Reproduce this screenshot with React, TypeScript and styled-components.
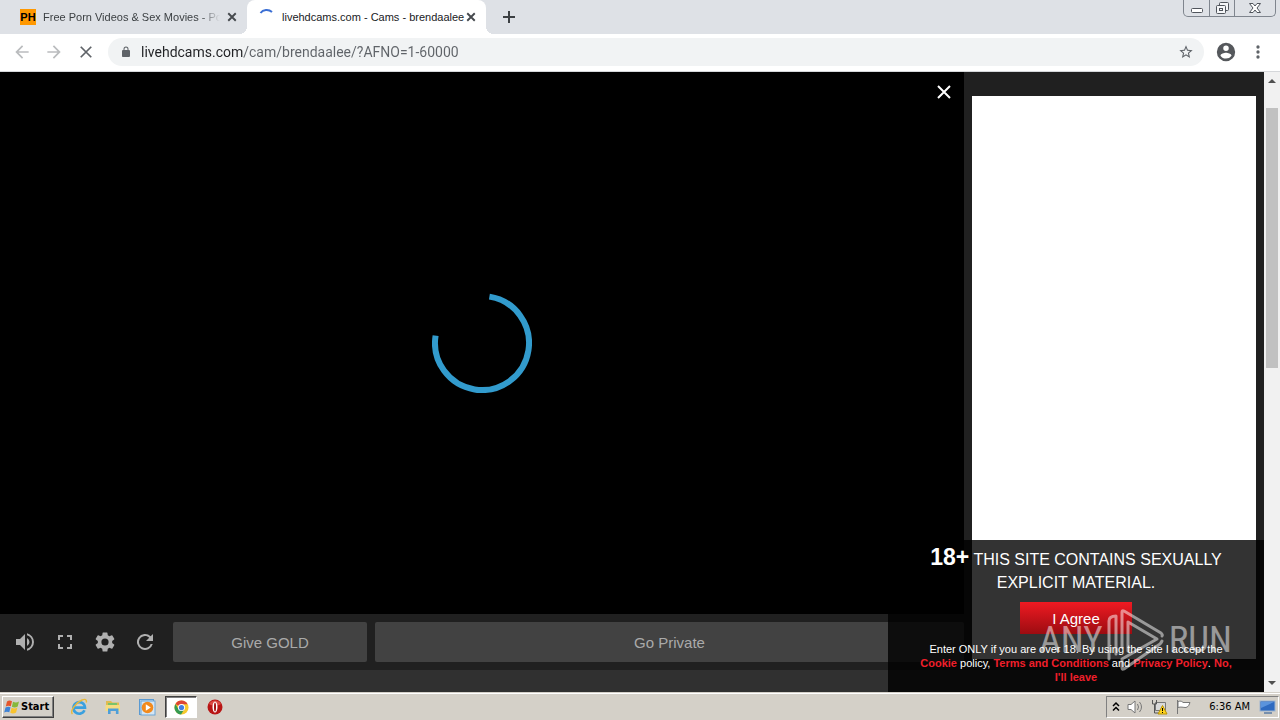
import React from "react";
import styled, { createGlobalStyle, css } from "styled-components";

const ui = `"DejaVu Sans Condensed", Roboto, "Liberation Sans", sans-serif`;
const chrome = `Roboto, "Liberation Sans", sans-serif`;
const arial = `"Liberation Sans", Arial, sans-serif`;

const GlobalStyle = createGlobalStyle`
  * { box-sizing: border-box; }
  html, body { margin: 0; background: #202020; }
  button, input { font: inherit; color: inherit; margin: 0; padding: 0; border: 0; background: none; }
  svg { display: block; flex: none; }
`;

const Screen = styled.div`
  position: relative;
  display: flex;
  flex-direction: column;
  min-height: 100vh;
  font-family: ${arial};
`;

/* Browser frame */
const TabStrip = styled.header`
  display: flex;
  height: 34px;
  background: #dee1e6;
  font-family: ${arial};
  font-size: 11px;
  color: #3c4043;
`;
const Tabs = styled.div`
  display: flex;
  padding-left: 8px;
`;
const Tab = styled.div<{ $active?: boolean }>`
  position: relative;
  display: flex;
  align-items: center;
  width: 239px;
  padding: 0 9px 0 12px;
  gap: 6px;
  border-radius: 8px 8px 0 0;
  ${(p) =>
    p.$active &&
    css`
      background: #fff;
      color: #202124;
      &::before,
      &::after {
        content: "";
        position: absolute;
        bottom: 0;
        width: 8px;
        height: 8px;
      }
      &::before {
        left: -8px;
        background: radial-gradient(circle at 0 0, transparent 8px, #fff 8px);
      }
      &::after {
        right: -8px;
        background: radial-gradient(circle at 100% 0, transparent 8px, #fff 8px);
      }
    `}
`;
const TabLabel = styled.button`
  display: flex;
  align-items: center;
  flex: 1;
  min-width: 0;
  gap: 7px;
  text-align: left;
`;
const TabTitle = styled.span<{ $fade?: boolean }>`
  flex: 1;
  white-space: nowrap;
  line-height: 16px;
  ${(p) =>
    p.$fade &&
    css`
      overflow: hidden;
      mask-image: linear-gradient(90deg, #000 calc(100% - 20px), transparent);
    `}
`;
const SiteMark = styled.span`
  width: 16px;
  height: 16px;
  background: #ff9800;
  color: #000;
  font: bold 11px/16px ${arial};
  text-align: center;
`;
const IconButton = styled.button<{ $w?: number }>`
  display: flex;
  align-items: center;
  justify-content: center;
  flex: none;
  width: ${(p) => p.$w ?? 16}px;
`;
const WindowButtons = styled.div`
  display: flex;
  height: 17px;
  margin: 0 4px 0 auto;
  border: 1px solid #7f858e;
  border-top: 0;
  border-radius: 0 0 5px 5px;
`;
const WindowButton = styled.button<{ $w: number }>`
  display: flex;
  align-items: center;
  justify-content: center;
  width: ${(p) => p.$w}px;
  & + & {
    border-left: 1px solid #7f858e;
  }
`;
const Toolbar = styled.div`
  display: flex;
  align-items: center;
  height: 38px;
  padding: 0 6px 1px;
  background: #fff;
  border-bottom: 1px solid #d5d7da;
`;
const AddressBar = styled.label`
  display: flex;
  align-items: center;
  flex: 1;
  height: 28px;
  margin: 0 6px;
  padding: 0 10px 0 12px;
  gap: 9px;
  border-radius: 14px;
  background: #f1f3f4;
`;
const AddressInput = styled.input`
  flex: 1;
  min-width: 0;
  font-family: ${chrome};
  font-size: 14px;
  line-height: 20px;
  /* the host name is darker than the path */
  color: transparent;
  caret-color: #202124;
  background: linear-gradient(90deg, #202124 103px, #5f6368 103px);
  background-clip: text;
  outline: none;
`;

/* Web page */
const Viewport = styled.div`
  display: flex;
  flex: 1;
`;
const Page = styled.main`
  position: relative;
  display: flex;
  flex-direction: column;
  flex: 1;
  background: #202020;
`;
const Columns = styled.div`
  display: flex;
  flex: 1;
`;
const Player = styled.section`
  display: flex;
  flex-direction: column;
  flex: 1;
`;
const Video = styled.div`
  position: relative;
  display: flex;
  align-items: center;
  justify-content: center;
  flex: 1;
  background: #000;
`;
const CloseVideo = styled.button`
  position: absolute;
  top: 12px;
  right: 12px;
`;
const Controls = styled.div`
  display: flex;
  align-items: center;
  height: 56px;
  padding-left: 5px;
  color: #b0b0b0;
`;
const Actions = styled.div`
  display: grid;
  grid-template-columns: 194px 1fr;
  flex: 1;
  gap: 8px;
  margin-left: 8px;
`;
const Action = styled.button`
  height: 40px;
  border-radius: 2px;
  background: #424242;
  color: #aaa;
  font-size: 15px;
`;
const Sidebar = styled.aside`
  display: flex;
  width: 300px;
  padding: 24px 8px 11px;
`;
const Card = styled.div`
  flex: 1;
  background: #fff;
`;
const Band = styled.div`
  height: 22px;
  background: #303030;
`;
const AgeNotice = styled.section`
  position: absolute;
  right: 0;
  bottom: 0;
  display: flex;
  flex-direction: column;
  align-items: center;
  width: 376px;
  height: 152px;
  padding: 6px 28px 0;
  background: rgba(0, 0, 0, 0.8);
  color: #fff;
  text-align: center;
`;
const Warning = styled.p`
  margin: 0 0 8px;
  font-size: 16px;
  line-height: 23px;
  strong {
    font-size: 23px;
  }
`;
const Agree = styled.button`
  width: 112px;
  height: 32px;
  flex: none;
  background: linear-gradient(#ef1a22, #9c0c11);
  font-size: 15px;
`;
const Terms = styled.p`
  margin: 8px 0 0;
  font-size: 11px;
  line-height: 14px;
  a {
    color: #ef1f2b;
    font-weight: bold;
    text-decoration: none;
  }
`;
const ScrollTrack = styled.div`
  display: flex;
  flex-direction: column;
  width: 16px;
  background: #f1f1f1;
`;
const ScrollArrow = styled.button`
  display: flex;
  align-items: center;
  justify-content: center;
  height: 18px;
`;
const ScrollRun = styled.div`
  flex: 1;
  padding: 18px 2px 0;
`;
const ScrollThumb = styled.div`
  height: 260px;
  background: #c1c1c1;
`;

/* Desktop taskbar */
const Taskbar = styled.footer`
  display: flex;
  align-items: center;
  height: 28px;
  padding: 2px 1px 0 2px;
  background: #d4d0c8;
  box-shadow: inset 0 1px #d4d0c8, inset 0 2px #fff;
  color: #000;
`;
const StartButton = styled.button`
  display: flex;
  align-items: center;
  gap: 1px;
  width: 52px;
  height: 22px;
  padding-left: 1px;
  border: 1px solid;
  border-color: #fff #404040 #404040 #fff;
  box-shadow: inset -1px -1px #808080;
  font: bold 11px/16px ${ui};
`;
const QuickLaunch = styled.div`
  display: flex;
  gap: 2px;
  margin-left: 9px;
`;
const AppButton = styled.button<{ $active?: boolean }>`
  display: flex;
  align-items: center;
  justify-content: center;
  width: 32px;
  height: 22px;
  ${(p) =>
    p.$active &&
    css`
      background: #fff;
      border: 1px solid;
      border-color: #404040 #fff #fff #404040;
      box-shadow: inset 1px 1px #808080;
    `}
`;
const Tray = styled.div`
  display: flex;
  align-items: center;
  gap: 7px;
  height: 22px;
  margin-left: auto;
  padding: 0 2px 0 5px;
  border: 1px solid;
  border-color: #808080 #fff #fff #808080;
`;
const Clock = styled.time`
  margin: 0 2px 0 10px;
  font: 11px/16px ${ui};
`;

const Watermark = styled.div`
  position: absolute;
  right: 48px;
  bottom: 46px;
  display: flex;
  align-items: center;
  gap: 4px;
  height: 68px;
  color: rgba(255, 255, 255, 0.5);
  font: 37px/48px "Roboto Condensed", "Liberation Sans Narrow", sans-serif;
  pointer-events: none;
`;

const Cross = ({ size, color, width = 2 }: { size: number; color: string; width?: number }) => (
  <svg width={size} height={size} viewBox="0 0 16 16" stroke={color} strokeWidth={width} fill="none">
    <path d="M2 2 14 14M14 2 2 14" />
  </svg>
);

const Material = ({ d, color = "currentColor", size = 24 }: { d: string; color?: string; size?: number }) => (
  <svg width={size} height={size} viewBox="0 0 24 24" fill={color}>
    <path d={d} />
  </svg>
);

const paths = {
  back: "M20 11H7.83l5.59-5.59L12 4l-8 8 8 8 1.41-1.41L7.83 13H20z",
  forward: "M12 4l-1.41 1.41L16.17 11H4v2h12.17l-5.58 5.59L12 20l8-8z",
  lock: "M18 8h-1V6A5 5 0 0 0 7 6v2H6a2 2 0 0 0-2 2v10c0 1.1.9 2 2 2h12a2 2 0 0 0 2-2V10a2 2 0 0 0-2-2zM9 6a3 3 0 0 1 6 0v2H9z",
  star: "M22 9.24l-7.19-.62L12 2 9.19 8.63 2 9.24l5.46 4.73L5.82 21 12 17.27 18.18 21l-1.63-7.03zM12 15.4l-3.76 2.27 1-4.28-3.32-2.88 4.38-.38L12 6.1l1.71 4.04 4.38.38-3.32 2.88 1 4.28z",
  person: "M12 2a10 10 0 1 0 0 20 10 10 0 0 0 0-20zm0 3a3 3 0 1 1 0 6 3 3 0 0 1 0-6zm0 14.2a7.2 7.2 0 0 1-6-3.22c.03-1.99 4-3.08 6-3.08s5.97 1.09 6 3.08a7.2 7.2 0 0 1-6 3.22z",
  more: "M12 8a2 2 0 1 0 0-4 2 2 0 0 0 0 4zm0 2a2 2 0 1 0 0 4 2 2 0 0 0 0-4zm0 6a2 2 0 1 0 0 4 2 2 0 0 0 0-4z",
  volume: "M3 9v6h4l5 5V4L7 9zm13.5 3A4.5 4.5 0 0 0 14 7.97v8.05A4.5 4.5 0 0 0 16.5 12zM14 3.23v2.06a7 7 0 0 1 0 13.42v2.06a9 9 0 0 0 0-17.54z",
  full: "M7 14H5v5h5v-2H7zm-2-4h2V7h3V5H5zm12 7h-3v2h5v-5h-2zM14 5v2h3v3h2V5z",
  gear: "M19.14 12.94c.04-.3.06-.61.06-.94 0-.32-.02-.64-.07-.94l2.03-1.58a.49.49 0 0 0 .12-.61l-1.92-3.32a.49.49 0 0 0-.59-.22l-2.39.96a7 7 0 0 0-1.62-.94l-.36-2.54a.48.48 0 0 0-.48-.41h-3.84a.47.47 0 0 0-.47.41l-.36 2.54c-.59.24-1.13.57-1.62.94l-2.39-.96a.47.47 0 0 0-.59.22L2.74 8.87a.47.47 0 0 0 .12.61l2.03 1.58a6 6 0 0 0-.02 1.88l-2.03 1.58a.49.49 0 0 0-.12.61l1.92 3.32c.12.22.37.29.59.22l2.39-.96c.5.38 1.03.7 1.62.94l.36 2.54c.05.24.24.41.48.41h3.84c.24 0 .44-.17.47-.41l.36-2.54a7 7 0 0 0 1.62-.94l2.39.96c.22.08.47 0 .59-.22l1.92-3.32a.47.47 0 0 0-.12-.61zM12 15.6a3.6 3.6 0 1 1 0-7.2 3.6 3.6 0 0 1 0 7.2z",
  reload: "M17.65 6.35A8 8 0 1 0 19.73 14h-2.08A6 6 0 1 1 12 6c1.66 0 3.14.69 4.22 1.78L13 11h7V4z",
};

const BrowserTabs = () => (
  <TabStrip>
    <Tabs>
      <Tab>
        <TabLabel>
          <SiteMark>PH</SiteMark>
          <TabTitle $fade>Free Porn Videos &amp; Sex Movies - Por</TabTitle>
        </TabLabel>
        <IconButton $w={12} aria-label="Close tab">
          <Cross size={10} color="#45494d" width={3} />
        </IconButton>
      </Tab>
      <Tab $active>
        <TabLabel>
          <svg width="16" height="16" viewBox="0 0 16 16" fill="none" stroke="#3b6fd4" strokeWidth="2">
            <path d="M1.5 4C4 .6 9.500 0 13 3" />
          </svg>
          <TabTitle>livehdcams.com - Cams - brendaalee</TabTitle>
        </TabLabel>
        <IconButton $w={12} aria-label="Close tab">
          <Cross size={10} color="#45494d" width={3} />
        </IconButton>
      </Tab>
    </Tabs>
    <IconButton $w={46} aria-label="New tab">
      <svg width="12" height="12" stroke="#3c4043" strokeWidth="2">
        <path d="M6 0V12M0 6H12" />
      </svg>
    </IconButton>
    <WindowButtons>
      <WindowButton $w={25} aria-label="Minimize">
        <svg width="12" height="16" fill="#fff" stroke="#50555c">
          <rect x=".5" y="8.500" width="11" height="4" rx="1" />
        </svg>
      </WindowButton>
      <WindowButton $w={25} aria-label="Restore">
        <svg width="13" height="16" fill="#f5f6f8" stroke="#50555c">
          <rect x="3.500" y="2.500" width="9" height="8" rx="1" />
          <rect x=".5" y="5.500" width="9" height="8" rx="1" />
          <rect x="3.500" y="8.500" width="3" height="2" />
        </svg>
      </WindowButton>
      <WindowButton $w={41} aria-label="Close">
        <svg width="12" height="16" fill="#fff" stroke="#50555c">
          <path d="M.5 3.500H4L6 6l2-2.500h3.500L8 8l3.500 4.500H8L6 10l-2 2.500H.5L4 8z" />
        </svg>
      </WindowButton>
    </WindowButtons>
  </TabStrip>
);

const BrowserToolbar = () => (
  <Toolbar>
    <IconButton $w={32} aria-label="Back"><Material d={paths.back} color="#babcbe" size={20} /></IconButton>
    <IconButton $w={32} aria-label="Forward"><Material d={paths.forward} color="#babcbe" size={20} /></IconButton>
    <IconButton $w={32} aria-label="Stop"><Cross size={14} color="#5f6368" /></IconButton>
    <AddressBar>
      <Material d={paths.lock} color="#5f6368" size={12} />
      <AddressInput aria-label="Address" defaultValue="livehdcams.com/cam/brendaalee/?AFNO=1-60000" />
      <IconButton aria-label="Bookmark"><Material d={paths.star} color="#5f6368" size={16} /></IconButton>
    </AddressBar>
    <IconButton $w={32} aria-label="Profile"><Material d={paths.person} color="#55585c" size={22} /></IconButton>
    <IconButton $w={32} aria-label="Menu"><Material d={paths.more} color="#5f6368" size={20} /></IconButton>
  </Toolbar>
);

const WindowsFlag = () => (
  <svg width="16" height="16" viewBox="0 0 16 16">
    <path d="M3 2.500C5 1 6.500 1.500 8 2.300L6.800 7.300C5 6.400 3.500 6.500 1.800 7.500z" fill="#e5562b" />
    <path d="M9 2.800c2 1 4 1 6-.3l-1.300 5c-2 1.200-4 1.200-5.800.2z" fill="#86b83a" />
    <path d="M1.500 8.500c2-1 3.500-1 5-.2L5.300 13.300C3.500 12.500 2 12.500.2 13.500z" fill="#3f83d6" />
    <path d="M7.600 8.800c2 1 3.800 1 5.800-.2l-1.300 5c-2 1.200-4 1.200-5.800.2z" fill="#f8c32e" />
  </svg>
);
const Explorer = () => (
  <svg width="18" height="18" viewBox="0 0 18 18" fill="none">
    <path d="M14.500 12.300A5.800 5.800 0 1 1 15 9.600H4" stroke="#3aa0df" strokeWidth="2.600" />
    <path d="M2.500 16C-.5 13 6 4.500 12 2c3-1.200 5-.8 4.300 2.500" stroke="#e8b93c" strokeWidth="1.400" />
  </svg>
);
const Folder = () => (
  <svg width="18" height="18" viewBox="0 0 18 18">
    <path d="M2 3h5l1.500 1.500H15V13H2z" fill="#e0bb50" />
    <path d="M4 5h9v3H4z" fill="#79c36a" />
    <path d="M1.500 7h14.500v6H1.500z" fill="#f6dc80" />
    <path d="M4 16v-5.500h10.500V16h-2.600v-3H6.600v3z" fill="#4f9fd8" />
  </svg>
);
const MediaPlayer = () => (
  <svg width="17" height="17" viewBox="0 0 17 17">
    <rect x=".5" y=".5" width="14" height="15" fill="#b8d7ef" stroke="#5a9ad2" />
    <rect x="2" y="2" width="14" height="14" fill="#d5e6f4" stroke="#6da6d6" />
    <circle cx="8.500" cy="8.500" r="5.800" fill="#f28a1c" />
    <path d="M6.800 5.300 11.800 8.500l-5 3.200z" fill="#fff" />
  </svg>
);
const Chrome = () => (
  <svg width="15" height="15" viewBox="0 0 16 16">
    <circle cx="8" cy="8" r="7.500" fill="#f6c92d" />
    <path d="M8 8 1.500 4.200A7.500 7.500 0 0 1 14.500 4.500H8z" fill="#dd4535" />
    <path d="M1.500 4.250A7.500 7.500 0 0 0 7.500 15.500L11 9.800 8 8 4.700 9.500z" fill="#359a52" />
    <circle cx="8" cy="8" r="3.800" fill="#fff" />
    <circle cx="8" cy="8" r="2.800" fill="#437ee0" />
  </svg>
);
const Opera = () => (
  <svg width="16" height="16" viewBox="0 0 16 16">
    <circle cx="8" cy="8" r="7.500" fill="#b81515" />
    <path d="M2 5a7 7 0 0 1 12 0c-3 2-9 2-12 0z" fill="#dc4a44" />
    <ellipse cx="8" cy="8" rx="2.500" ry="5.500" fill="#fff" />
    <ellipse cx="8" cy="8" rx="1" ry="4.500" fill="#a30f0f" />
  </svg>
);

const DesktopTaskbar = () => (
  <Taskbar>
    <StartButton><WindowsFlag />Start</StartButton>
    <QuickLaunch>
      <AppButton aria-label="Internet Explorer"><Explorer /></AppButton>
      <AppButton aria-label="File Explorer"><Folder /></AppButton>
      <AppButton aria-label="Media Player"><MediaPlayer /></AppButton>
      <AppButton aria-label="Chrome" $active><Chrome /></AppButton>
      <AppButton aria-label="Opera"><Opera /></AppButton>
    </QuickLaunch>
    <Tray>
      <svg width="8" height="12" fill="none" stroke="#000" strokeWidth="1.500">
        <path d="M1 5 4 2l3 3M1 9.500l3-3 3 3" />
      </svg>
      <svg width="17" height="16" viewBox="0 0 17 16" fill="#fff" stroke="#777">
        <path d="M1 5.500h3L8 2v12l-4-3.500H1z" />
        <path d="M10.500 5q2 3 0 6M12.500 3q4 5 0 10" fill="none" />
      </svg>
      <svg width="17" height="16" viewBox="0 0 17 16">
        <path d="M4.500 3.500h10v8h-10z" fill="#d9d9d9" stroke="#777" />
        <path d="M1.500 1v4h4V1M3.500 5v9h4" fill="none" stroke="#555" />
        <path d="M11.500 6.500 16 15H7z" fill="#ffd51e" stroke="#b89000" />
        <path d="M11.500 9v3M11.500 13v1" stroke="#000" />
      </svg>
      <svg width="17" height="16" viewBox="0 0 17 16" fill="#fff" stroke="#777">
        <path d="M2.500 1v14M3 2.500c3-1 4 0 5 1h7c-1 2-1 4-4 5-3 0-5-1-8 0z" />
      </svg>
      <Clock>6:36 AM</Clock>
      <svg width="17" height="16" viewBox="0 0 17 16">
        <rect x="1" y="2" width="15" height="10" fill="#2f6ac0" stroke="#9db4cf" />
        <path d="M2 3h13L2 9z" fill="#5b93dc" />
        <path d="M5 13h8v2H5z" fill="#7890ad" />
      </svg>
    </Tray>
  </Taskbar>
);

const App = () => (
  <>
    <GlobalStyle />
    <Screen>
      <BrowserTabs />
      <BrowserToolbar />
      <Viewport>
        <Page>
          <Columns>
            <Player>
              <Video>
                <svg width="100" height="100" viewBox="0 0 100 100" fill="none" stroke="#329bcd" strokeWidth="6">
                  <path d="M57.400 3.600A47 47 0 1 1 3.600 42.600" />
                </svg>
                <CloseVideo aria-label="Close video"><Cross size={16} color="#fff" /></CloseVideo>
              </Video>
              <Controls>
                <IconButton $w={40} aria-label="Volume"><Material d={paths.volume} /></IconButton>
                <IconButton $w={40} aria-label="Full screen"><Material d={paths.full} /></IconButton>
                <IconButton $w={40} aria-label="Settings"><Material d={paths.gear} /></IconButton>
                <IconButton $w={40} aria-label="Reload"><Material d={paths.reload} /></IconButton>
                <Actions>
                  <Action>Give GOLD</Action>
                  <Action>Go Private</Action>
                </Actions>
              </Controls>
            </Player>
            <Sidebar><Card /></Sidebar>
          </Columns>
          <Band />
          <AgeNotice>
            <Warning><strong>18+</strong> THIS SITE CONTAINS SEXUALLY EXPLICIT MATERIAL.</Warning>
            <Agree>I Agree</Agree>
            <Terms>
              Enter ONLY if you are over 18. By using the site I accept the <a href="#cookie">Cookie</a> policy,{" "}
              <a href="#terms">Terms and Conditions</a> and <a href="#privacy">Privacy Policy</a>.{" "}
              <a href="#leave">No, I'll leave</a>
            </Terms>
          </AgeNotice>
        </Page>
        <ScrollTrack>
          <ScrollArrow aria-label="Scroll up"><svg width="8" height="4"><path d="M0 4 4 0l4 4z" fill="#505050" /></svg></ScrollArrow>
          <ScrollRun><ScrollThumb /></ScrollRun>
          <ScrollArrow aria-label="Scroll down"><svg width="8" height="4"><path d="M0 0h8L4 4z" fill="#505050" /></svg></ScrollArrow>
        </ScrollTrack>
      </Viewport>
      <DesktopTaskbar />
      <Watermark>
        <span>ANY</span>
        <svg width="58" height="66" viewBox="0 0 58 66" fill="none" stroke="currentColor" strokeWidth="3" strokeLinejoin="round" strokeLinecap="round">
          <path d="M2 52V14q0-5 7-5v38" />
          <path d="M15 40V5q0-2 2-1l37 22q2 2 1 3M55 34q-1 2-2 3L17 62q-2 1-2-1v-9l35-20L21 15v29" />
        </svg>
        <span>RUN</span>
      </Watermark>
    </Screen>
  </>
);

export default App;
